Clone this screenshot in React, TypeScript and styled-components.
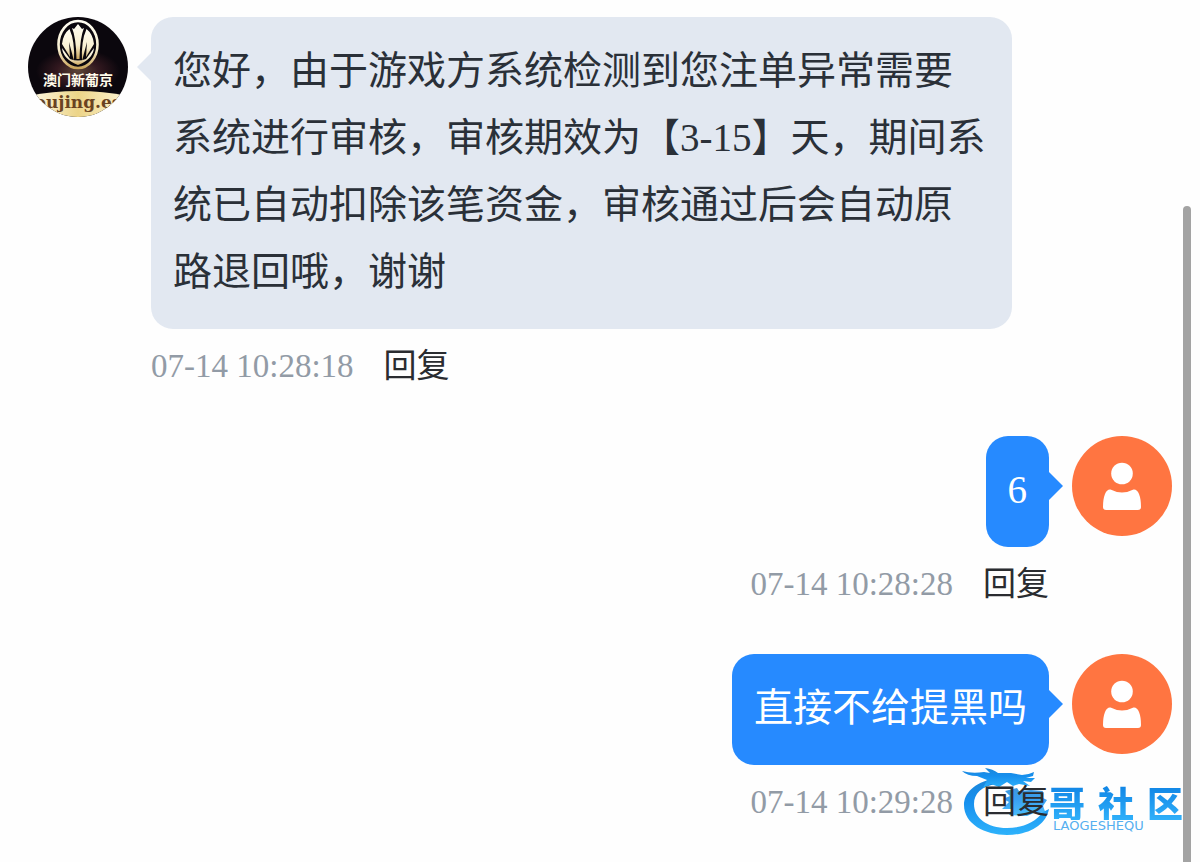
import React from 'react';
import styled, { createGlobalStyle, css } from 'styled-components';

const GlobalStyle = createGlobalStyle`
  *, *::before, *::after { box-sizing: border-box; }
  body {
    margin: 0;
    background: #fefefe;
    font-family: "Liberation Serif", "Noto Sans CJK SC", serif;
    color: #2a3038;
  }
`;

const Page = styled.main`
  position: relative;
  min-height: 100vh;
  padding: 17px 28px 0;
  overflow: hidden;
`;

const ScrollThumb = styled.div`
  position: absolute;
  top: 206px;
  right: 9px;
  bottom: 0;
  width: 8px;
  border-radius: 4px 4px 0 0;
  background: #a3a3a3;
`;

const Thread = styled.ol`
  position: relative;
  z-index: 1;
  display: flex;
  flex-direction: column;
  gap: 46px;
  margin: 0;
  padding: 0;
  list-style: none;
`;

const Message = styled.li<{ $own?: boolean }>`
  display: flex;
  flex-direction: ${p => (p.$own ? 'row-reverse' : 'row')};
  align-items: flex-start;
  gap: 23px;
`;

const Avatar = styled.svg`
  flex: none;
  width: 100px;
  height: 100px;
`;

const Content = styled.div<{ $own?: boolean }>`
  display: flex;
  flex-direction: column;
  align-items: ${p => (p.$own ? 'flex-end' : 'flex-start')};
  flex: 1;
  min-width: 0;
  ${p => !p.$own && css`margin-right: 160px;`}
`;

const Bubble = styled.p<{ $own?: boolean }>`
  position: relative;
  margin: 0;
  padding: 20px 22px 24px;
  border-radius: 22px;
  font-size: 39px;
  line-height: 67px;
  color: ${p => (p.$own ? '#fff' : '#2a3038')};
  background: ${p => (p.$own ? '#268aff' : '#e2e8f1')};

  &::after {
    content: '';
    position: absolute;
    top: 36px;
    border: 14px solid transparent;
    ${p => (p.$own
      ? css`left: 100%; border-right: 0; border-left-color: #268aff;`
      : css`right: 100%; border-left: 0; border-right-color: #e2e8f1;`)}
  }
`;

const Meta = styled.div`
  display: flex;
  align-items: center;
  gap: 30px;
  margin-top: 13px;
  font-size: 33px;
  line-height: 48px;
`;

const Time = styled.time`
  color: #929ba6;
`;

const Reply = styled.button`
  padding: 0;
  border: 0;
  background: none;
  font: inherit;
  color: #2a2c30;
  cursor: pointer;
`;

const Watermark = styled.div`
  position: absolute;
  right: 17px;
  bottom: 24px;
  display: flex;
  align-items: flex-end;
  pointer-events: none;
`;

const Dragon = styled.svg`
  width: 90px;
  height: 72px;
`;

const Brand = styled.div`
  display: flex;
  flex-direction: column;
  width: 134px;
  padding-bottom: 6px;
`;

const BrandName = styled.div`
  display: flex;
  justify-content: space-between;
  font: 900 36px/36px "Noto Sans CJK SC", sans-serif;
  color: transparent;
  background: linear-gradient(#0f83e4, #2fb0fa);
  background-clip: text;
`;

const BrandLatin = styled.div`
  padding-left: 4px;
  font: 13px/12px "DejaVu Sans", sans-serif;
  color: #55aff0;
`;

function UserAvatar() {
  return (
    <Avatar viewBox="0 0 100 100" role="img" aria-label="用户">
      <circle cx="50" cy="50" r="50" fill="#ff7541" />
      <circle cx="50" cy="37.500" r="10.800" fill="#fff" />
      <path d="M38.500 53.500Q50 59.500 61.500 53.500Q65 53 67 58Q69 63 69 71Q69 74 66 74H34Q31 74 31 71Q31 63 33 58Q35 53 38.500 53.500Z" fill="#fff" />
    </Avatar>
  );
}

function AgentAvatar() {
  return (
    <Avatar viewBox="0 0 100 100" role="img" aria-label="澳门新葡京">
      <defs>
        <clipPath id="disc"><circle cx="50" cy="50" r="50" /></clipPath>
        <linearGradient id="gold" x1="0" y1="0" x2="0" y2="1">
          <stop offset="0" stopColor="#fffdf2" />
          <stop offset=".6" stopColor="#f8efcf" />
          <stop offset="1" stopColor="#c9a45c" />
        </linearGradient>
        <radialGradient id="glow" cx=".5" cy=".54" r=".42" gradientTransform="translate(0 .26) scale(1 .52)">
          <stop offset="0" stopColor="#5c4436" />
          <stop offset=".5" stopColor="#32181f" />
          <stop offset="1" stopColor="#0b070d" />
        </radialGradient>
        <linearGradient id="band" x1="0" y1="0" x2="1" y2="0">
          <stop offset="0" stopColor="#fffbe8" />
          <stop offset=".5" stopColor="#ecd488" />
          <stop offset="1" stopColor="#fff6d6" />
        </linearGradient>
      </defs>
      <g clipPath="url(#disc)">
        <rect width="100" height="100" fill="url(#glow)" />
        <ellipse cx="50" cy="27.500" rx="19.500" ry="23.500" fill="#0b070d" stroke="url(#gold)" strokeWidth="2.600" />
        <path d="M50 7L54 12L56 11Q52 20 51.500 42H48.500Q48 20 44 11L46 12Z" fill="url(#gold)" />
        <path d="M41.500 12Q35 17 34 27L42 40L41 25L46 44Q47 24 41.500 12Z" fill="url(#gold)" />
        <path d="M58.500 12Q65 17 66 27L58 40L59 25L54 44Q53 24 58.500 12Z" fill="url(#gold)" />
        <path d="M34 31Q35 42 50 48Q65 42 66 31L58 42Q50 45 42 42Z" fill="url(#gold)" />
        <text x="50" y="68" textAnchor="middle" fontSize="14" fontWeight="600" fill="#fffbea" fontFamily="'Noto Sans CJK SC', sans-serif">澳门新葡京</text>
        <path d="M0 79Q50 69 100 79V100H0Z" fill="url(#band)" />
        <text x="50" y="91" textAnchor="middle" fontSize="17" fontWeight="700" fill="#6a4321" fontFamily="'DejaVu Serif', serif">oujing.es</text>
      </g>
    </Avatar>
  );
}

function DragonMark() {
  return (
    <Dragon viewBox="0 0 90 72" aria-hidden="true">
      <defs>
        <linearGradient id="wave" x1="0" y1="0" x2="0" y2="1">
          <stop offset="0" stopColor="#1c86d8" />
          <stop offset=".4" stopColor="#168fee" />
          <stop offset="1" stopColor="#2db2fb" />
        </linearGradient>
      </defs>
      <g fill="url(#wave)">
        <path d="M36 12C14 17 5 28 5 39C5 58 26 69 48 69C70 69 87 59 90 43L84 46C76 57 62 62 48 62C28 62 15 52 15 38C15 28 22 20 38 18Z" />
        <path d="M3 5Q13 8 25 6L31 7L26 2Q34 3 39 7L52 7L63 9Q69 9 75 6L74 10L67 12L76 12L72 16L64 15L71 20L60 18L54 20L48 16L40 21L32 18L24 22L28 14L18 10Q8 10 3 5Z" />
        <path d="M46 25L58 22L60 25L72 24L84 25L82 31L88 34L84 40L87 48L75 47L68 50L50 49L53 43L43 43L50 36L44 33L51 30Z" fillOpacity=".85" />
      </g>
    </Dragon>
  );
}

function MessageMeta({ time }: { time: string }) {
  return (
    <Meta>
      <Time>{time}</Time>
      <Reply type="button">回复</Reply>
    </Meta>
  );
}

const messages = [
  {
    own: false,
    time: '07-14 10:28:18',
    text: '您好，由于游戏方系统检测到您注单异常需要系统进行审核，审核期效为【3-15】天，期间系统已自动扣除该笔资金，审核通过后会自动原路退回哦，谢谢',
  },
  { own: true, time: '07-14 10:28:28', text: '6' },
  { own: true, time: '07-14 10:29:28', text: '直接不给提黑吗' },
];

export default function App() {
  return (
    <Page lang="zh-CN">
      <GlobalStyle />
      <Thread>
        {messages.map(m => (
          <Message key={m.time} $own={m.own}>
            {m.own ? <UserAvatar /> : <AgentAvatar />}
            <Content $own={m.own}>
              <Bubble $own={m.own}>{m.text}</Bubble>
              <MessageMeta time={m.time} />
            </Content>
          </Message>
        ))}
      </Thread>
      <Watermark>
        <DragonMark />
        <Brand>
          <BrandName><span>哥</span><span>社</span><span>区</span></BrandName>
          <BrandLatin>LAOGESHEQU</BrandLatin>
        </Brand>
      </Watermark>
      <ScrollThumb />
    </Page>
  );
}
